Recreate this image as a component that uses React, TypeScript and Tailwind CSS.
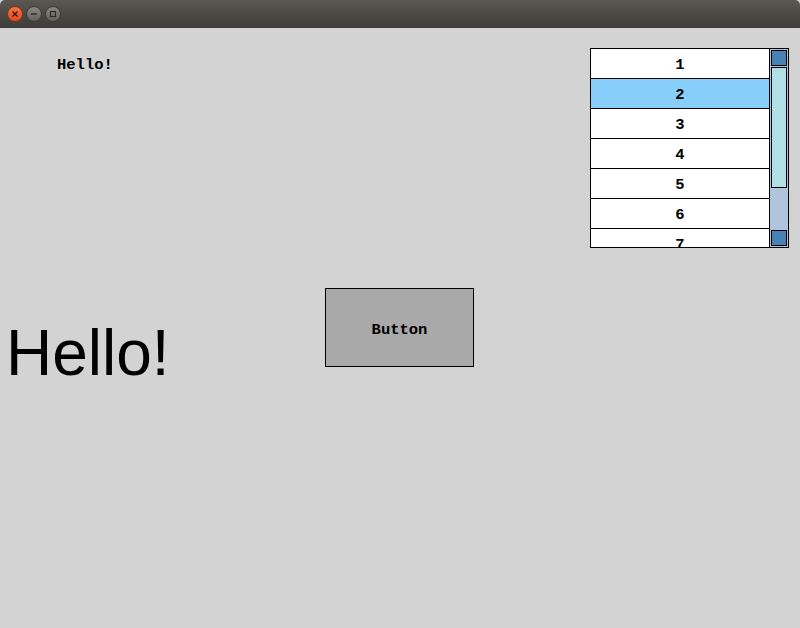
import React from 'react';

const rows = ['1', '2', '3', '4', '5', '6', '7'];

const TitleBar: React.FC = () => {
  return (
    <div className="h-[28px] bg-gradient-to-b from-[#5b5852] to-[#3d3c38] rounded-t-[5px] flex items-center gap-[3px] pl-[7px]">
      {/* close */}
      <div className="w-[16px] h-[16px] rounded-full bg-gradient-to-b from-[#f37449] to-[#df4a16] border border-[#8a3212] flex items-center justify-center">
        <svg width="8" height="8" viewBox="0 0 8 8">
          <path d="M1.5 1.5 L6.5 6.5 M6.5 1.5 L1.5 6.5" stroke="#3b1406" strokeWidth="1.3" />
        </svg>
      </div>
      {/* minimize */}
      <div className="w-[16px] h-[16px] rounded-full bg-gradient-to-b from-[#8a8882] to-[#64625d] border border-[#3a3935] flex items-center justify-center">
        <svg width="8" height="8" viewBox="0 0 8 8">
          <path d="M1 4 L7 4" stroke="#2d2c29" strokeWidth="1.4" />
        </svg>
      </div>
      {/* maximize */}
      <div className="w-[16px] h-[16px] rounded-full bg-gradient-to-b from-[#8a8882] to-[#64625d] border border-[#3a3935] flex items-center justify-center">
        <svg width="8" height="8" viewBox="0 0 8 8">
          <rect x="1.5" y="1.5" width="5" height="5" fill="none" stroke="#2d2c29" strokeWidth="1.2" />
        </svg>
      </div>
    </div>
  );
};

const ListBox: React.FC = () => {
  return (
    <div className="w-[199px] h-[200px] border border-black flex overflow-hidden bg-white">
      <div className="flex-1 overflow-hidden">
        {rows.map((r) => (
          <div
            key={r}
            className={`h-[30px] shrink-0 border-b border-black flex items-center justify-center pt-[2px] ${r === '2' ? 'bg-[#87cefa]' : 'bg-white'}`}
          >
            {r}
          </div>
        ))}
      </div>
      <div className="w-[19px] border-l border-black bg-[#b0c4de] flex flex-col p-[1px] gap-[1px]">
        <div className="h-[16px] border border-black bg-[#4682b4]" />
        <div className="h-[121px] border border-black bg-[#b0e0e6]" />
        <div className="flex-1" />
        <div className="h-[16px] border border-black bg-[#4682b4]" />
      </div>
    </div>
  );
};

const App: React.FC = () => {
  return (
    <div className="w-[800px] h-[628px] bg-[#d3d3d3] overflow-hidden font-['Liberation_Mono',monospace] font-bold text-[15.5px] leading-[18px] text-black">
      <TitleBar />

      {/* Top row: label + list */}
      <div className="flex justify-between items-start pt-[20px] pr-[11px]">
        <div className="ml-[57px] mt-[8px]">Hello!</div>
        <ListBox />
      </div>

      {/* Second row: big label + button */}
      <div className="flex items-start mt-[40px]">
        <div className="w-[325px] pl-[6px] mt-[33px] font-['Liberation_Sans',Arial,sans-serif] font-normal text-[64px] leading-none">
          Hello!
        </div>
        <div className="w-[149px] h-[79px] border border-black bg-[#a9a9a9] flex items-center justify-center pt-[4px]">
          Button
        </div>
      </div>
    </div>
  );
};

export default App;
